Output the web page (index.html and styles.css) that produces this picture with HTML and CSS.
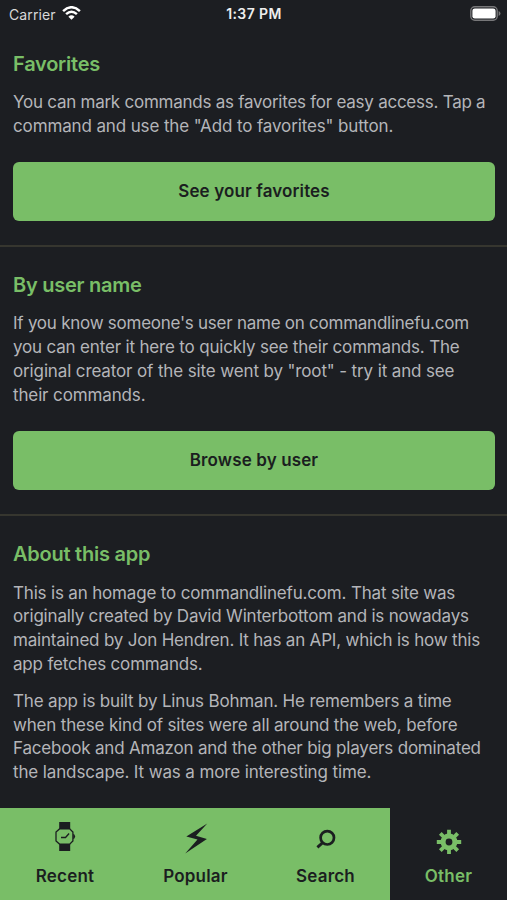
FILE: index.html
```html
<!DOCTYPE html>
<html lang="en">
<head>
<meta charset="utf-8">
<meta name="viewport" content="width=device-width">
<title>Other</title>
<link rel="stylesheet" href="styles.css">
</head>
<body>
<header class="status">
  <div class="carrier"><span>Carrier</span>
    <svg class="wifi" width="19" height="14" viewBox="0 0 19 14" fill="none" stroke="#fff" stroke-width="2.5"><path d="M1.1 5.1Q9.5-2.6 17.9 5.1M4.1 8.2Q9.5 3.2 14.9 8.2"/><path d="M6.4 10.7Q9.5 7.9 12.6 10.7L9.5 13.7Z" fill="#fff" stroke="none"/></svg>
  </div>
  <div class="time">1:37 PM</div>
  <svg class="battery" width="31" height="15" viewBox="0 0 31 15"><rect x=".8" y=".8" width="26.4" height="13.4" rx="4" fill="none" stroke="#777779" stroke-width="1.4"/><rect x="2.4" y="2.4" width="23.2" height="10.2" rx="2.4" fill="#fff"/><path d="M28.6 5Q30.5 5.7 30.5 7.5T28.6 10Z" fill="#777779"/></svg>
</header>
<main class="content">
  <section class="section">
    <h2>Favorites</h2>
    <p><span class="tightest">You can mark commands as favorites for easy access. Tap a</span><br><span class="loose">command and use the "Add to favorites" button.</span></p>
    <button class="button" type="button">See your favorites</button>
  </section>
  <section class="section">
    <h2>By user name</h2>
    <p><span class="tightest">If you know someone's user name on commandlinefu.com</span><br>you can enter it here to quickly see their commands. The<br><span class="loose">original creator of the site went by "root" - try it and see</span><br><span class="loose">their commands.</span></p>
    <button class="button" type="button">Browse by user</button>
  </section>
  <section class="section">
    <h2>About this app</h2>
    <p>This is an homage to commandlinefu.com. That site was<br><span class="tight">originally created by David Winterbottom and is nowadays</span><br><span class="tight">maintained by Jon Hendren. It has an API, which is how this</span><br>app fetches commands.</p>
    <p>The app is built by Linus Bohman. He remembers a time<br>when these kind of sites were all around the web, before<br><span class="tight">Facebook and Amazon and the other big players dominated</span><br><span class="loose">the landscape. It was a more interesting time.</span></p>
  </section>
</main>
<nav class="tabs">
  <a class="tab"><svg width="30" height="34" viewBox="0 0 30 34"><path d="M9.2 2h11v7h-11zM9.2 24h11v7h-11z" fill="#1b1e20"/><path d="M9.5 8.9h10.2l3.2 3.2v8.8l-3.2 3.2H9.5l-3.5-3.2v-8.8z" fill="#79be67" stroke="#1b1e20" stroke-width="1.3"/><path d="M23.2 13.8q1.9.5 1.9 2.7t-1.9 2.7z" fill="#1b1e20"/><path d="M11 17.5h4.5l3.6-4" fill="none" stroke="#1b1e20" stroke-width="1.3"/></svg><span>Recent</span></a>
  <a class="tab"><svg width="30" height="34" viewBox="0 0 30 34"><path d="M26.3 3.4 5.3 16.4l11.2 3.2L4.2 33.5 25.9 18.9 15 15.8z" fill="#1b1e20"/></svg><span>Popular</span></a>
  <a class="tab"><svg width="30" height="34" viewBox="0 0 30 34" fill="none" stroke="#1b1e20"><circle cx="16.3" cy="17.8" r="6.7" stroke-width="2.7"/><path d="M11.7 22.6 6.4 27.3" stroke-width="2.9"/></svg><span>Search</span></a>
  <a class="tab tab-active"><svg width="30" height="34" viewBox="0 0 30 34"><g transform="translate(15 22)" fill="none" stroke="#79be67"><circle r="5.9" stroke-width="5"/><path d="M0-12.2v5M0 7.2v5M-12.2 0h5M7.2 0h5M-8.7-8.7l3.5 3.5M5.2 5.2l3.5 3.5M-8.7 8.7l3.5-3.5M5.2-5.2l3.5-3.5" stroke-width="3.8"/></g></svg><span>Other</span></a>
</nav>
</body>
</html>
```
FILE: styles.css
```css
* { box-sizing: border-box; }
body {
  margin: 0;
  height: 900px;
  overflow: hidden;
  display: flex;
  flex-direction: column;
  background: #1c1e22;
  color: #b4b5b9;
  font-family: Inter, "Liberation Sans", sans-serif;
}
.status {
  height: 28px;
  flex: none;
  display: grid;
  grid-template-columns: 1fr auto 1fr;
  align-items: center;
  padding: 0 6px 0 9px;
  color: #eee;
  font-size: 14px;
}
.carrier { display: flex; align-items: center; gap: 6px; color: #d8d8d9; letter-spacing: 0.1px; }
.wifi { margin-top: -2px; }
.time { font-weight: 600; letter-spacing: 0.4px; margin: -1px 2px 0 0; }
.battery { justify-self: end; margin-top: -1px; }
.content { flex: 1; min-height: 0; overflow: hidden; }
.section { padding: 24.5px 12px 23.5px 13px; border-bottom: 2px solid #36362f; }
.section:first-child { padding-top: 21.5px; }
.section:last-child { border: 0; padding-bottom: 0; }
h2 {
  margin: 0 0 13.4px;
  font-size: 20px;
  line-height: 28px;
  font-weight: 600;
  letter-spacing: -0.24px;
  color: #79be67;
}
p {
  margin: 0;
  font-size: 17px;
  line-height: 23.8px;
  letter-spacing: -0.175px;
  white-space: nowrap;
}
p + p { margin-top: 13px; }
.tightest { letter-spacing: -0.25px; }
.tight { letter-spacing: -0.195px; }
.loose { letter-spacing: -0.13px; }
.button {
  display: block;
  width: 100%;
  height: 59px;
  margin-top: 23.6px;
  padding: 0 0 2px;
  border: 0;
  border-radius: 6px;
  background: #79be67;
  color: #1b1e20;
  font: 600 17px/24px Inter, "Liberation Sans", sans-serif;
  letter-spacing: 0.12px;
}
.tabs {
  flex: none;
  height: 92px;
  display: grid;
  grid-template-columns: 130px 131px 129px 1fr;
  background: #79be67;
}
.tab {
  display: flex;
  flex-direction: column;
  align-items: center;
  padding-top: 12px;
  color: #1b1e20;
  font-size: 17px;
  line-height: 24px;
  font-weight: 600;
  letter-spacing: 0.2px;
}
.tab svg { margin-bottom: 10px; }
.tab-active { background: #1c1e22; color: #79be67; }
```
